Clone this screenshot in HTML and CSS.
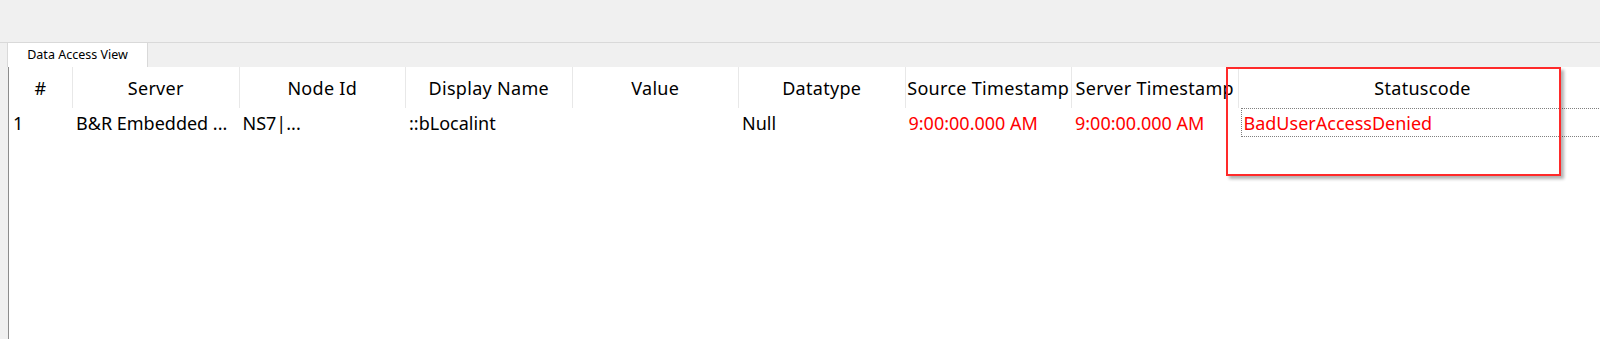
FILE: index.html
```html
<!DOCTYPE html>
<html lang="en">
<head>
  <meta charset="UTF-8">
  <title>Data Access View</title>
  <link rel="stylesheet" href="styles.css">
</head>
<body>
<div class="toolbar"></div>

<div class="tab-strip">
  <div class="tab">Data Access View</div>
</div>

<div class="panel">
  <div class="grid-header">
    <div class="col col-num">#</div>
    <div class="col">Server</div>
    <div class="col">Node Id</div>
    <div class="col">Display Name</div>
    <div class="col">Value</div>
    <div class="col">Datatype</div>
    <div class="col">Source Timestamp</div>
    <div class="col">Server Timestamp</div>
    <div class="col col-status">Statuscode</div>
  </div>

  <div class="grid-row">
    <div class="cell col-num">1</div>
    <div class="cell">B&amp;R Embedded ...</div>
    <div class="cell">NS7|...</div>
    <div class="cell">::bLocalint</div>
    <div class="cell"></div>
    <div class="cell">Null</div>
    <div class="cell bad">9:00:00.000 AM</div>
    <div class="cell bad">9:00:00.000 AM</div>
    <div class="cell col-status bad focused">BadUserAccessDenied</div>
  </div>

  <!-- annotation drawn over the screenshot -->
  <div class="highlight"></div>
</div>
</body>
</html>
```

FILE: styles.css
```css
* {
  margin: 0;
  padding: 0;
  box-sizing: border-box;
}

body {
  background-color: #f0f0f0;
  font-family: "Segoe UI", "Noto Sans", sans-serif;
  color: #000;
  height: 339px;
  overflow: hidden;
  display: flex;
  flex-direction: column;
}

.toolbar {
  height: 43px;
  border-bottom: 1px solid #d9d9d9;
  flex-shrink: 0;
}

.tab-strip {
  height: 24px;
  padding-left: 7px;
  display: flex;
  flex-shrink: 0;
}

.tab {
  width: 141px;
  background-color: #fff;
  border-right: 1px solid #d9d9d9;
  border-left: 1px solid #d9d9d9;
  font-size: 12.5px;
  display: flex;
  align-items: center;
  justify-content: center;
  padding-bottom: 1px;
}

.panel {
  flex: 1;
  margin-left: 8px;
  background-color: #fff;
  border-left: 1px solid #8c8c8c;
  position: relative;
  font-size: 18px;
}

.grid-header,
.grid-row {
  display: flex;
  white-space: nowrap;
}

.grid-header {
  height: 41px;
}

.grid-row {
  height: 29px;
}

.col,
.cell {
  width: 166.5px;
  flex-shrink: 0;
  overflow: hidden;
}

.col {
  display: flex;
  align-items: center;
  justify-content: center;
  border-right: 1px solid #e8e8e8;
  letter-spacing: 0.3px;
}

.col-num {
  width: 64px;
}

.col-status {
  width: 368px;
  border-right: none;
}

.cell {
  padding-left: 3px;
  display: flex;
  align-items: center;
}

.cell.col-num {
  padding-left: 4px;
}

.bad {
  color: #ff0000;
}

.focused {
  width: 380px;
  border: 1px dotted #808080;
  border-right: none;
  margin-left: 2px;
  padding-left: 2px;
}

.highlight {
  position: absolute;
  left: 1217px;
  top: 0;
  width: 335px;
  height: 109px;
  border: 2px solid #ff2a2a;
  box-shadow: 3px 3px 3px rgba(0, 0, 0, 0.3);
}
```
